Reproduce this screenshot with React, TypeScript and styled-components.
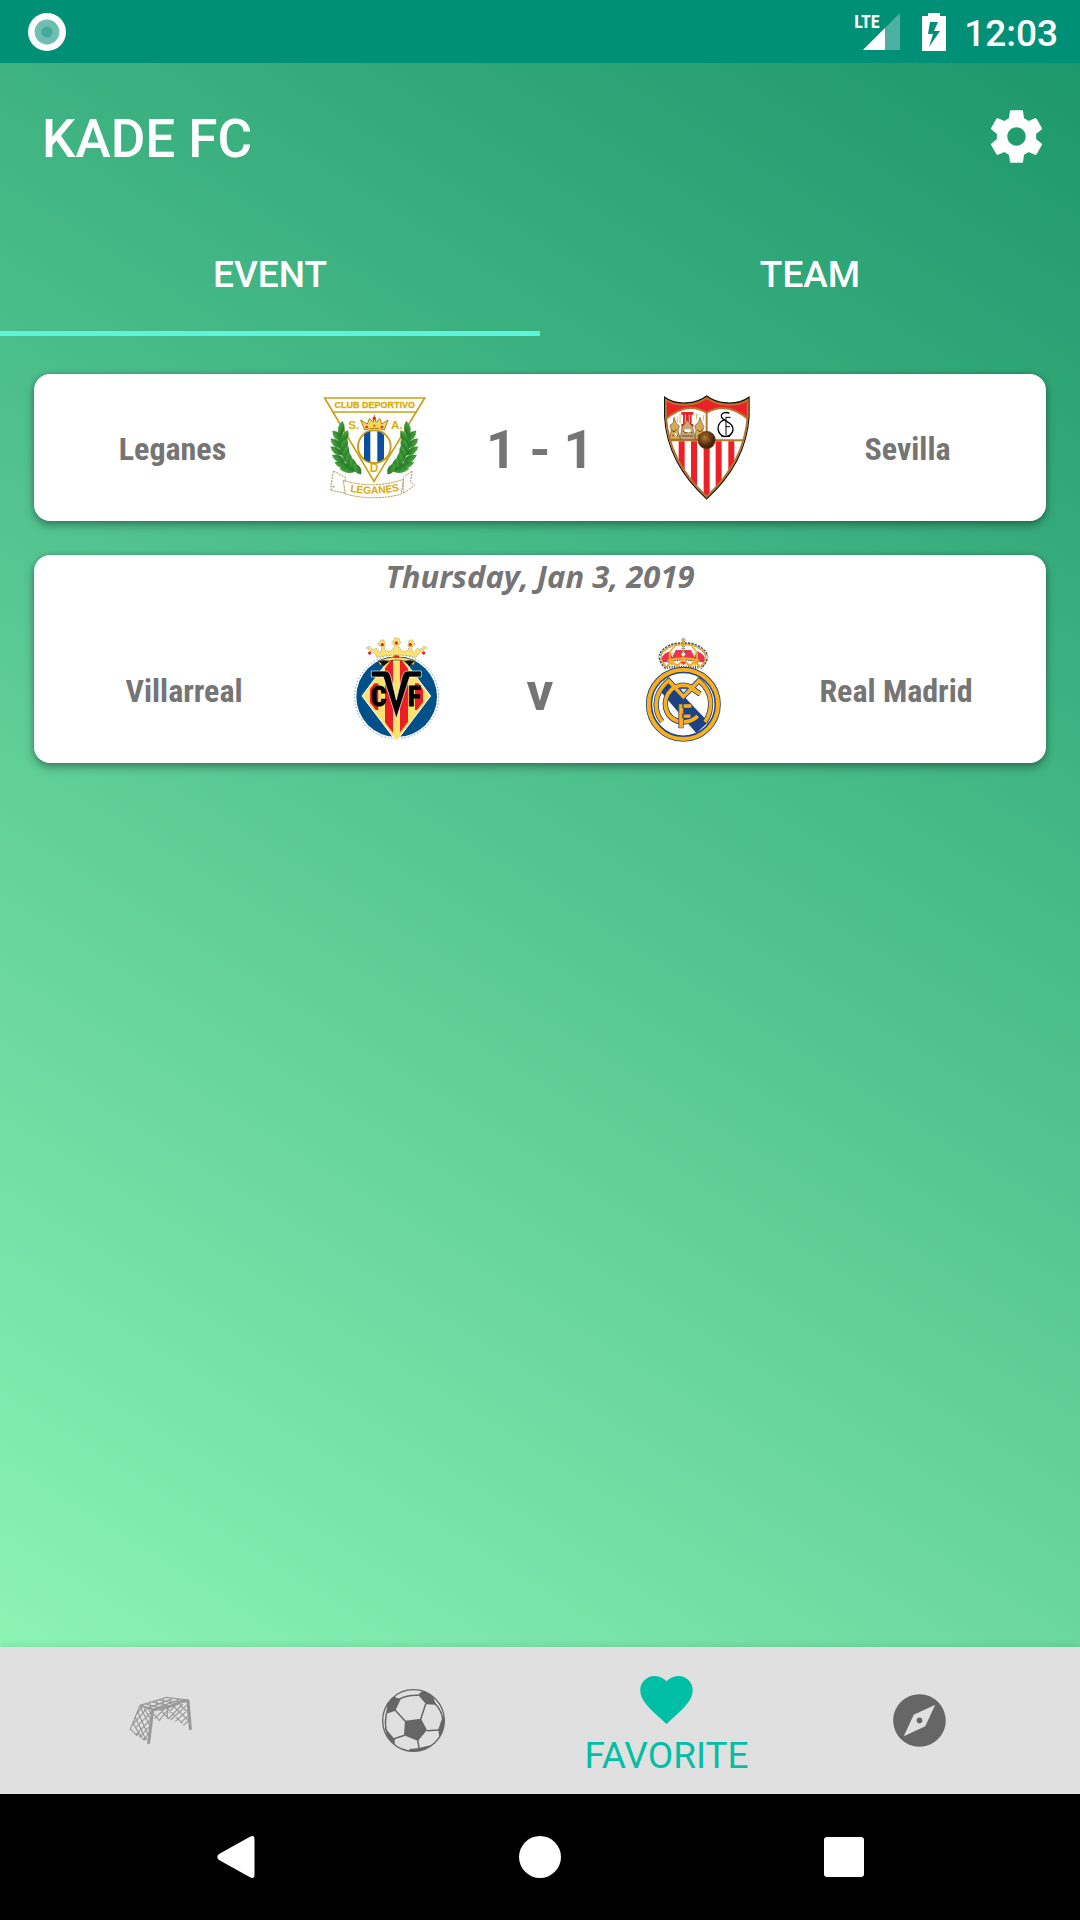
import React from 'react';
import styled, { createGlobalStyle } from 'styled-components';
import { MdExplore, MdFavorite } from 'react-icons/md';

const GlobalStyle = createGlobalStyle`
  *, *::before, *::after { box-sizing: border-box; }
  body {
    margin: 0;
    font-family: Roboto, "Liberation Sans", sans-serif;
  }
`;

const colors = {
  statusBar: '#008f77',
  accent: '#00bfa5',
  indicator: '#5ef3da',
  text: '#757575',
  icon: '#666666',
  navBackground: '#e0e0e0',
};

const Screen = styled.div`
  display: flex;
  flex-direction: column;
  min-height: 100vh;
`;

const StatusBar = styled.div`
  display: flex;
  align-items: center;
  justify-content: space-between;
  height: 63px;
  padding: 0 22px 0 28px;
  background: ${colors.statusBar};
  color: #fff;
`;

const StatusGroup = styled.div`
  display: flex;
  align-items: center;
`;

const Signal = styled.div`
  position: relative;
  width: 46px;
  height: 38px;
  margin-right: 22px;
`;

const NetworkLabel = styled.span`
  position: absolute;
  top: 0;
  left: 0;
  font: bold 18px/18px "Roboto Condensed", Roboto, sans-serif;
`;

const Clock = styled.time`
  margin-left: 18px;
  font-size: 37px;
  line-height: 42px;
  font-weight: 500;
  padding-top: 4px;
`;

const AppArea = styled.div`
  display: flex;
  flex: 1;
  flex-direction: column;
  background: linear-gradient(32deg, #93f9b9 0%, #1d976c 100%);
`;

const Toolbar = styled.header`
  display: flex;
  align-items: center;
  justify-content: space-between;
  height: 147px;
  padding: 0 32px 0 42px;
  color: #fff;
`;

const Title = styled.h1`
  margin: 0;
  padding-top: 4px;
  font-size: 53px;
  line-height: 62px;
  font-weight: 500;
`;

const IconButton = styled.button`
  display: flex;
  padding: 0;
  border: 0;
  background: none;
  color: inherit;
  cursor: pointer;
`;

const Tabs = styled.div`
  display: flex;
  height: 126px;
`;

const Tab = styled.button<{ $active?: boolean }>`
  flex: 1;
  padding: 8px 0 0;
  border: 0;
  border-bottom: 5px solid ${(p) => (p.$active ? colors.indicator : 'transparent')};
  background: none;
  color: #fff;
  font: 500 37px/42px Roboto, "Liberation Sans", sans-serif;
  cursor: pointer;
`;

const MatchList = styled.main`
  display: flex;
  flex: 1;
  flex-direction: column;
  gap: 34px;
  padding: 38px 34px;
`;

const Card = styled.article`
  border-radius: 16px;
  background: #fff;
  color: ${colors.text};
  box-shadow: 0 4px 10px rgba(0, 0, 0, 0.36), 0 0 4px rgba(0, 0, 0, 0.14);
`;

const MatchDate = styled.p`
  height: 61px;
  margin: 0;
  text-align: center;
  font: italic bold 31px/42px "Open Sans", "Noto Sans", sans-serif;
`;

const MatchRow = styled.div`
  display: flex;
  align-items: center;
  height: 147px;
`;

const TeamName = styled.span<{ $side: 'home' | 'away' }>`
  flex: 1;
  padding-top: 2px;
  padding-${(p) => (p.$side === 'home' ? 'right' : 'left')}: 10px;
  text-align: center;
  font: bold 32px/40px "Roboto Condensed", Roboto, sans-serif;
`;

const Score = styled.strong`
  min-width: 182px;
  padding: 4px 60px 0;
  text-align: center;
  font-size: 53px;
  line-height: 62px;
`;

const Crest = styled.svg`
  width: 105px;
  height: 105px;
`;

const BottomNav = styled.nav`
  display: flex;
  height: 147px;
  padding: 0 34px;
  background: ${colors.navBackground};
  box-shadow: 0 -2px 6px rgba(0, 0, 0, 0.08);
`;

const NavItem = styled.button<{ $active?: boolean }>`
  display: flex;
  flex: 1;
  flex-direction: column;
  align-items: center;
  justify-content: center;
  padding: ${(p) => (p.$active ? '8px' : 0)} 0 0;
  border: 0;
  background: none;
  color: ${(p) => (p.$active ? colors.accent : colors.icon)};
  font: 37px/50px Roboto, "Liberation Sans", sans-serif;
  cursor: pointer;
`;

const SystemBar = styled.div`
  display: flex;
  justify-content: center;
  height: 126px;
  background: #000;
  color: #fff;
`;

const SystemButton = styled(IconButton)`
  width: 304px;
  align-items: center;
  justify-content: center;
`;

const RecordIcon = () => (
  <svg width="38" height="38" viewBox="0 0 38 38" aria-hidden="true">
    <circle cx="19" cy="19" r="19" fill="#fff" />
    <circle cx="19" cy="19" r="12.4" fill="#6ebeb2" />
    <circle cx="19" cy="19" r="5.6" fill="#45ab9a" />
  </svg>
);

const SignalIcon = () => (
  <svg width="46" height="38" viewBox="0 0 46 38" aria-hidden="true">
    <path d="M46 0V37H9Z" fill="#fff" opacity=".3" />
    <path d="M31 15V37H9Z" fill="#fff" />
  </svg>
);

const BatteryIcon = () => (
  <svg width="24" height="38" viewBox="0 0 24 38" aria-hidden="true">
    <path
      fill="#fff"
      fillRule="evenodd"
      d="M6 0H18V3H24V38H0V3H6ZM8 9L6 21H11L7 34L18 18H12L16 9Z"
    />
  </svg>
);

const SettingsIcon = () => (
  <svg width="63" height="63" viewBox="0 0 24 24" fill="currentColor" aria-hidden="true">
    <path d="M19.43 12.98c.04-.32.07-.64.07-.98s-.03-.66-.07-.98l2.11-1.65c.19-.15.24-.42.12-.64l-2-3.46c-.12-.22-.39-.3-.61-.22l-2.49 1c-.52-.4-1.08-.73-1.69-.98l-.38-2.65C14.46 2.18 14.25 2 14 2h-4c-.25 0-.46.18-.49.42l-.38 2.65c-.61.25-1.17.59-1.69.98l-2.49-1c-.23-.09-.49 0-.61.22l-2 3.46c-.13.22-.07.49.12.64l2.11 1.65c-.04.32-.07.65-.07.98s.03.66.07.98l-2.11 1.65c-.19.15-.24.42-.12.64l2 3.46c.12.22.39.3.61.22l2.49-1c.52.4 1.08.73 1.69.98l.38 2.65c.03.24.24.42.49.42h4c.25 0 .46-.18.49-.42l.38-2.65c.61-.25 1.17-.59 1.69-.98l2.49 1c.23.09.49 0 .61-.22l2-3.46c.12-.22.07-.49-.12-.64l-2.11-1.65zM12 15.5c-1.93 0-3.5-1.57-3.5-3.5s1.57-3.5 3.5-3.5 3.5 1.57 3.5 3.5-1.57 3.5-3.5 3.5z" />
  </svg>
);

/* Leaves of the left half of the laurel: x, y, rotation, length */
const laurelLeaves: [number, number, number, number][] = [
  [92, 146, 8, 23],
  [80, 168, -42, 21],
  [102, 170, 28, 21],
  [76, 190, -48, 21],
  [101, 195, 22, 22],
  [78, 213, -55, 22],
  [106, 217, 12, 22],
  [84, 236, -62, 22],
  [114, 238, 0, 22],
  [95, 255, -72, 24],
  [127, 253, -18, 22],
  [113, 269, -84, 26],
  [140, 266, -34, 20],
];

const LaurelHalf = () => (
  <g>
    <path d="M92 140Q76 230 148 276" fill="none" stroke="#2c8a2b" strokeWidth="14" />
    {laurelLeaves.map(([x, y, angle, length]) => (
      <g key={`${x}-${y}`} transform={`translate(${x} ${y}) rotate(${angle})`}>
        <path
          d={`M0 ${-length}Q19 0 0 ${length}Q-19 0 0 ${-length}Z`}
          fill="url(#leaf)"
          stroke="#2a8a2c"
          strokeWidth="1"
        />
      </g>
    ))}
  </g>
);

const LeganesCrest = () => (
  <Crest viewBox="31 45 315 315" role="img" aria-label="Leganes crest">
    <defs>
      <linearGradient id="leaf" x1="0" y1="0" x2="1" y2="1">
        <stop offset="0" stopColor="#57b447" />
        <stop offset="1" stopColor="#17661e" />
      </linearGradient>
    </defs>
    <g stroke="#9a8142" strokeWidth="2.5" strokeDasharray="6 3" fill="#fff">
      <path d="M68 273L60 320L72 318L58 330L104 340V292Z" />
      <path d="M304 273L300 305L312 316L278 340V292Z" />
    </g>
    <path d="M42 54H342L190 304Z" fill="#fff" stroke="#caa018" strokeWidth="5" />
    <path d="M66 96H316" stroke="#caa018" strokeWidth="5" />
    <g fill="#dcae0a" fontFamily="Liberation Sans, sans-serif" fontWeight="bold">
      <text x="192" y="84" fontSize="27" stroke="#dcae0a" strokeWidth="1" textAnchor="middle">CLUB DEPORTIVO</text>
      <text x="113" y="146" fontSize="35">S.</text>
      <text x="241" y="146" fontSize="35">A.</text>
      <text x="190" y="276" fontSize="36" textAnchor="middle">D</text>
    </g>
    <circle cx="191" cy="200" r="49" fill="#fff" stroke="#caa018" strokeWidth="6" />
    <g fill="#0c4f9e">
      <path d="M160 164Q167 157 179 154V246Q167 243 160 236Z" />
      <path d="M200 154Q213 156 220 164V236Q213 243 200 246Z" />
    </g>
    <path
      d="M162 150L150 120L170 132L176 116L188 126L191 106L196 126L208 116L213 132L232 120L221 150Q192 140 162 150Z"
      fill="#f3d65a"
      stroke="#a88412"
      strokeWidth="3"
    />
    <g fill="#e22">
      <circle cx="191" cy="115" r="5" />
      <circle cx="168" cy="141" r="4" />
      <circle cx="191" cy="137" r="3" />
      <circle cx="214" cy="141" r="4" />
    </g>
    <LaurelHalf />
    <g transform="translate(382 0) scale(-1 1)">
      <LaurelHalf />
    </g>
    <path
      d="M98 302Q150 316 191 314Q232 314 278 298L272 342Q230 354 190 353Q150 354 104 342Z"
      fill="#fff"
      stroke="#a38a3f"
      strokeWidth="2.5"
      strokeDasharray="7 2"
    />
    <path id="leganes-scroll" d="M104 332Q192 352 280 328" fill="none" />
    <text fill="#d9ac12" fontSize="31" fontFamily="Liberation Sans, sans-serif" fontWeight="bold">
      <textPath href="#leganes-scroll" startOffset="50%" textAnchor="middle">LEGANES</textPath>
    </text>
  </Crest>
);

const SevillaCrest = () => (
  <Crest viewBox="34 45 315 315" role="img" aria-label="Sevilla crest">
    <defs>
      <clipPath id="sevilla-shield">
        <path d="M66 52Q92 71 130 69Q168 67 192 48Q216 67 254 69Q292 71 319 52V110C313 200 270 285 192 356C114 285 71 200 66 110Z" />
      </clipPath>
      <radialGradient id="ball" cx=".4" cy=".35">
        <stop offset="0" stopColor="#b47a35" />
        <stop offset="1" stopColor="#4a2408" />
      </radialGradient>
    </defs>
    <g clipPath="url(#sevilla-shield)">
      <path d="M60 45H325V360H60Z" fill="#fff" />
      <path d="M60 45H325V125Q255 60 192 98Q130 60 60 125Z" fill="#ec2027" />
      <path
        d="M60 125Q130 60 192 98Q255 60 325 125M192 96V180M60 181H325"
        fill="none"
        stroke="#b8742a"
        strokeWidth="6"
      />
      <g fill="#ec2027">
        <path d="M108 184h18V360h-18zM145 184h18V360h-18zM183 184h18V360h-18zM219 184h18V360h-18zM257 184h18V360h-18z" />
      </g>
      <path
        d="M80 178L86 150L82 136L92 128L94 112L100 128L110 138L106 152L114 178ZM156 178L160 150L156 138L168 126L172 112L177 128L184 140L180 152L184 160L170 178Z"
        fill="#d6a955"
        stroke="#70552b"
        strokeWidth="2"
      />
      <path d="M116 96h36v8h-5v28h5v8h-36v-8h5v-28h-5z" fill="#e0262b" />
      <path d="M128 104v26M140 104v26" stroke="#f6d9b0" strokeWidth="3" />
      <path d="M112 178L118 142L134 120L150 142L158 178Z" fill="#c9a877" stroke="#6d5134" strokeWidth="2" />
      <path
        d="M86 150l8 6l6-8M88 168l12-6l8 8M120 152l10 8l8-8l12 8M118 168h34M164 150l8 6l8-8M164 168l10-6"
        fill="none"
        stroke="#5d482c"
        strokeWidth="3"
      />
      <path d="M104 110v16M112 100v30M162 100v18M182 106v16" stroke="#dcb35a" strokeWidth="3" />
      <path d="M126 148h18v8h-18zM96 160h6v8h-6z" fill="#fff" />
    </g>
    <path
      d="M66 52Q92 71 130 69Q168 67 192 48Q216 67 254 69Q292 71 319 52V110C313 200 270 285 192 356C114 285 71 200 66 110Z"
      fill="none"
      stroke="#111"
      strokeWidth="4"
    />
    <path
      d="M70 60Q94 76 130 74Q168 72 192 54Q216 72 254 74Q290 76 315 60V110C309 200 268 280 192 350C116 280 75 200 70 110Z"
      fill="none"
      stroke="#b8742a"
      strokeWidth="6"
    />
    <g fill="none" stroke="#000" strokeWidth="4">
      <path d="M260 99Q238 94 236 107Q236 116 252 124Q272 134 271 150Q267 170 246 170Q228 166 226 146Q227 124 248 119" />
      <path d="M250 112V166M264 112H249M262 140H250M236 169H262" strokeWidth="3" />
    </g>
    <circle cx="192" cy="180" r="26" fill="url(#ball)" stroke="#5e3410" strokeWidth="2" />
    <path d="M172 174l12-10l16 4l12 14M180 196l16 2" fill="none" stroke="#3d1e08" strokeWidth="2" strokeDasharray="3 4" />
  </Crest>
);

const VillarrealCrest = () => (
  <Crest viewBox="12 51 315 315" role="img" aria-label="Villarreal crest">
    <defs>
      <clipPath id="villarreal-diamond">
        <path d="M169 98L263 228L169 352L75 228Z" />
      </clipPath>
    </defs>
    <circle cx="170" cy="230" r="126" fill="#fff" stroke="#5f8fb5" strokeWidth="3" strokeDasharray="4 6" />
    <circle cx="170" cy="230" r="121" fill="#00508a" />
    <path d="M169 90L272 228L169 364L66 228Z" fill="#fde26f" stroke="#fff" strokeWidth="3" />
    <g clipPath="url(#villarreal-diamond)" fill="#ee1c25">
      <path d="M90 190h25v80h-25zM135 90h24v260h-24zM180 90h24v260h-24zM225 190h24v80h-24z" />
    </g>
    <path
      d="M114 122Q170 100 226 122L220 136Q200 120 170 120Q140 120 120 136Z"
      fill="#fde26f"
      stroke="#47401c"
      strokeWidth="2"
    />
    <path d="M116 124Q132 118 148 124L132 138ZM224 124Q208 118 192 124L208 138Z" fill="#111" />
    <path
      d="M112 112Q100 94 78 84L88 78L100 90L108 84L120 98Q126 92 124 80L114 74L122 60L132 60L136 74L132 88Q148 100 158 88L164 78L156 68L164 54H176L182 68L174 78L182 88Q192 100 206 88L204 74L208 60H218L226 74L216 80Q214 92 220 98L232 84L240 90L252 78L262 84Q240 94 228 112Q170 98 112 112Z"
      fill="#fde26f"
      stroke="#7d8a7a"
      strokeWidth="2"
      strokeDasharray="4 3"
    />
    <g fill="#e8232a">
      <circle cx="89" cy="99" r="5" />
      <circle cx="127" cy="74" r="5" />
      <circle cx="169" cy="69" r="5" />
      <circle cx="211" cy="74" r="5" />
      <circle cx="251" cy="99" r="5" />
      <ellipse cx="169" cy="110" rx="9" ry="4" />
    </g>
    <path
      d="M94 153H138Q148 153 152 168L169 240L187 168Q191 153 201 153H244V171H209L169 296L130 171H94Z"
      fill="#000"
      stroke="#fff"
      strokeWidth="2"
    />
    <g fontFamily="Roboto Condensed, Roboto, sans-serif" fontWeight="bold" fontSize="82" fill="#000" stroke="#000" strokeWidth="3">
      <text x="92" y="258">C</text>
      <text x="203" y="258">F</text>
    </g>
  </Crest>
);

const RealMadridCrest = () => (
  <Crest viewBox="0 51 315 315" role="img" aria-label="Real Madrid crest">
    <defs>
      <clipPath id="madrid-disc">
        <circle cx="157" cy="253" r="94" />
      </clipPath>
    </defs>
    <path d="M108 146L84 120Q82 92 112 82Q134 72 157 74Q180 72 204 82Q232 92 230 120L206 146Z" fill="#fff" />
    <path
      d="M94 128Q86 104 116 94L124 112L134 90H180L190 112L198 94Q228 104 220 128Q157 112 94 128Z"
      fill="#e9344b"
    />
    <g fill="none" stroke="#2c4f90" strokeWidth="9" strokeDasharray="7 3">
      <path d="M106 144Q76 116 94 94Q120 68 157 72Q194 68 220 94Q238 116 208 144" />
    </g>
    <g fill="none" stroke="#2c4f90" strokeWidth="9" strokeDasharray="3 4">
      <path d="M110 124Q157 110 204 124M108 142H206M157 56V100" />
    </g>
    <g fill="none" stroke="#f2ae27" strokeWidth="5">
      <path d="M108 144Q78 116 96 94Q120 70 157 74Q194 70 218 94Q236 116 206 144" />
      <path d="M124 136Q104 98 132 80M190 136Q210 98 182 80M157 60V134" />
      <path d="M110 122Q157 108 204 122M108 140L122 124L138 138L157 120L176 138L192 124L206 140" strokeWidth="7" />
      <path d="M150 60h14M157 52v16" strokeWidth="4" />
    </g>
    <g fill="#fff" stroke="#8a7440" strokeWidth="1.5">
      <circle cx="87" cy="110" r="4" />
      <circle cx="124" cy="103" r="4" />
      <circle cx="157" cy="103" r="6" />
      <circle cx="190" cy="103" r="4" />
      <circle cx="227" cy="110" r="4" />
    </g>
    <path d="M148 126h18l-9 9z" fill="#e9344b" />
    <circle cx="157" cy="253" r="103" fill="#fff" stroke="#20458a" strokeWidth="19" />
    <circle cx="157" cy="253" r="104" fill="none" stroke="#fcaf17" strokeWidth="12" />
    <g clipPath="url(#madrid-disc)">
      <path d="M85 210L112 180L232 306L196 340Z" fill="#1c4283" />
    </g>
    <g fill="none" strokeLinejoin="miter">
      {[
        { color: '#20458a', width: 16 },
        { color: '#fcaf17', width: 11 },
      ].map(({ color, width }) => (
        <g key={color} stroke={color} strokeWidth={width}>
          <path d="M93 305Q68 274 78 232Q88 202 113 182L157 230L204 182Q236 208 239 246Q240 280 222 306" />
          <path d="M205 221L178 200Q150 188 122 208Q98 232 104 264Q114 302 154 306Q184 306 200 288" />
          <path d="M176 202L208 222" />
        </g>
      ))}
    </g>
    <path d="M146 206H170L158 220Z" fill="#fff" stroke="#20458a" strokeWidth="3" />
    <text
      x="137"
      y="325"
      fontFamily="Roboto Condensed, Roboto, sans-serif"
      fontWeight="bold"
      fontSize="98"
      fill="#fcaf17"
      stroke="#20458a"
      strokeWidth="2"
    >
      F
    </text>
  </Crest>
);

const GoalIcon = () => (
  <svg width="63" height="63" viewBox="87 147 189 189" fill="none" stroke="#999" aria-hidden="true">
    <g strokeWidth="3.5">
      <path d="M120 196L90 270M112 214L146 288M105 230L138 300M98 248L124 292M120 200L150 258M132 204L153 240M144 206L156 224" />
      <path d="M158 212L108 262M156 234L108 284M152 256L118 292M150 276L130 300M140 206L98 254M128 200L110 222M92 268L110 286L116 280L132 300L142 294" />
      <path d="M120 196L200 172L264 180M136 192L180 204M156 186L204 196M176 180L228 190M140 206L218 176M164 206L240 178M150 188V206M170 182V206M190 176V200M212 174V192M232 176V188" />
      <path d="M202 198V236M162 222L178 242L206 206M164 236L196 204M182 210L206 236L248 192M198 202L248 250M218 196L268 244M236 190L268 222M206 218L228 194M212 240L266 190M226 244L268 206M242 248L268 224M250 256L268 240" />
    </g>
    <path d="M120 196L160 208" strokeWidth="5" />
    <path d="M146 308L158 210Q216 200 236 188Q248 182 264 182L271 266" strokeWidth="9" strokeLinecap="round" strokeLinejoin="round" />
  </svg>
);

const BallIcon = () => (
  <svg width="63" height="63" viewBox="846 147 189 189" aria-hidden="true">
    <defs>
      <clipPath id="ball-outline">
        <circle cx="940.5" cy="241.5" r="93" />
      </clipPath>
    </defs>
    <g clipPath="url(#ball-outline)">
      <g fill={colors.icon}>
        <path d="M915 242L963 236L981 270L954 303L912 286Z" />
        <path d="M876 168L902 178L886 212L858 222L862 192Z" />
        <path d="M954 164L968 152L996 162L1008 194L978 193Z" />
        <path d="M1028 230L1036 226L1036 268L1018 294L1015 268Z" />
        <path d="M854 262L884 298L884 314L862 290Z" />
        <path d="M930 327Q964 324 996 314L960 338H920Z" />
      </g>
      <g fill="none" stroke={colors.icon} strokeWidth="4.5">
        <path d="M885 210L916 244M977 192L962 238M980 272L1018 270M953 301L958 328M914 286L880 297" />
        <path d="M896 178Q924 164 956 166M1004 190Q1024 210 1028 236M859 220Q854 246 858 270" />
      </g>
    </g>
    <circle cx="940.5" cy="241.5" r="92.5" fill="none" stroke={colors.icon} strokeWidth="4" />
  </svg>
);

type Match = {
  date?: string;
  home: string;
  away: string;
  score: string;
  HomeCrest: React.FC;
  AwayCrest: React.FC;
};

const matches: Match[] = [
  { home: 'Leganes', away: 'Sevilla', score: '1 - 1', HomeCrest: LeganesCrest, AwayCrest: SevillaCrest },
  {
    date: 'Thursday, Jan 3, 2019',
    home: 'Villarreal',
    away: 'Real Madrid',
    score: 'v',
    HomeCrest: VillarrealCrest,
    AwayCrest: RealMadridCrest,
  },
];

const MatchCard = ({ date, home, away, score, HomeCrest, AwayCrest }: Match) => (
  <Card>
    {date && <MatchDate>{date}</MatchDate>}
    <MatchRow>
      <TeamName $side="home">{home}</TeamName>
      <HomeCrest />
      <Score>{score}</Score>
      <AwayCrest />
      <TeamName $side="away">{away}</TeamName>
    </MatchRow>
  </Card>
);

export default function App() {
  return (
    <Screen>
      <GlobalStyle />
      <StatusBar>
        <RecordIcon />
        <StatusGroup>
          <Signal>
            <SignalIcon />
            <NetworkLabel>LTE</NetworkLabel>
          </Signal>
          <BatteryIcon />
          <Clock>12:03</Clock>
        </StatusGroup>
      </StatusBar>
      <AppArea>
        <Toolbar>
          <Title>KADE FC</Title>
          <IconButton type="button" aria-label="Settings">
            <SettingsIcon />
          </IconButton>
        </Toolbar>
        <Tabs role="tablist">
          <Tab type="button" role="tab" aria-selected="true" $active>EVENT</Tab>
          <Tab type="button" role="tab" aria-selected="false">TEAM</Tab>
        </Tabs>
        <MatchList>
          {matches.map((match) => (
            <MatchCard key={match.home} {...match} />
          ))}
        </MatchList>
        <BottomNav>
          <NavItem type="button" aria-label="Matches"><GoalIcon /></NavItem>
          <NavItem type="button" aria-label="Teams"><BallIcon /></NavItem>
          <NavItem type="button" $active>
            <MdFavorite size={63} aria-hidden="true" />
            FAVORITE
          </NavItem>
          <NavItem type="button" aria-label="Explore"><MdExplore size={63} aria-hidden="true" /></NavItem>
        </BottomNav>
      </AppArea>
      <SystemBar>
        <SystemButton type="button" aria-label="Back">
          <svg width="38" height="42" viewBox="0 0 38 42" fill="currentColor" aria-hidden="true">
            <path d="M33 .8Q37.500 -1.500 37.500 3.500V38.500Q37.500 43.500 33 41.200L2 24Q-1.500 21 2 18Z" />
          </svg>
        </SystemButton>
        <SystemButton type="button" aria-label="Home">
          <svg width="42" height="42" viewBox="0 0 42 42" fill="currentColor" aria-hidden="true">
            <circle cx="21" cy="21" r="21" />
          </svg>
        </SystemButton>
        <SystemButton type="button" aria-label="Recent apps">
          <svg width="40" height="40" viewBox="0 0 40 40" fill="currentColor" aria-hidden="true">
            <rect width="40" height="40" rx="3" />
          </svg>
        </SystemButton>
      </SystemBar>
    </Screen>
  );
}
